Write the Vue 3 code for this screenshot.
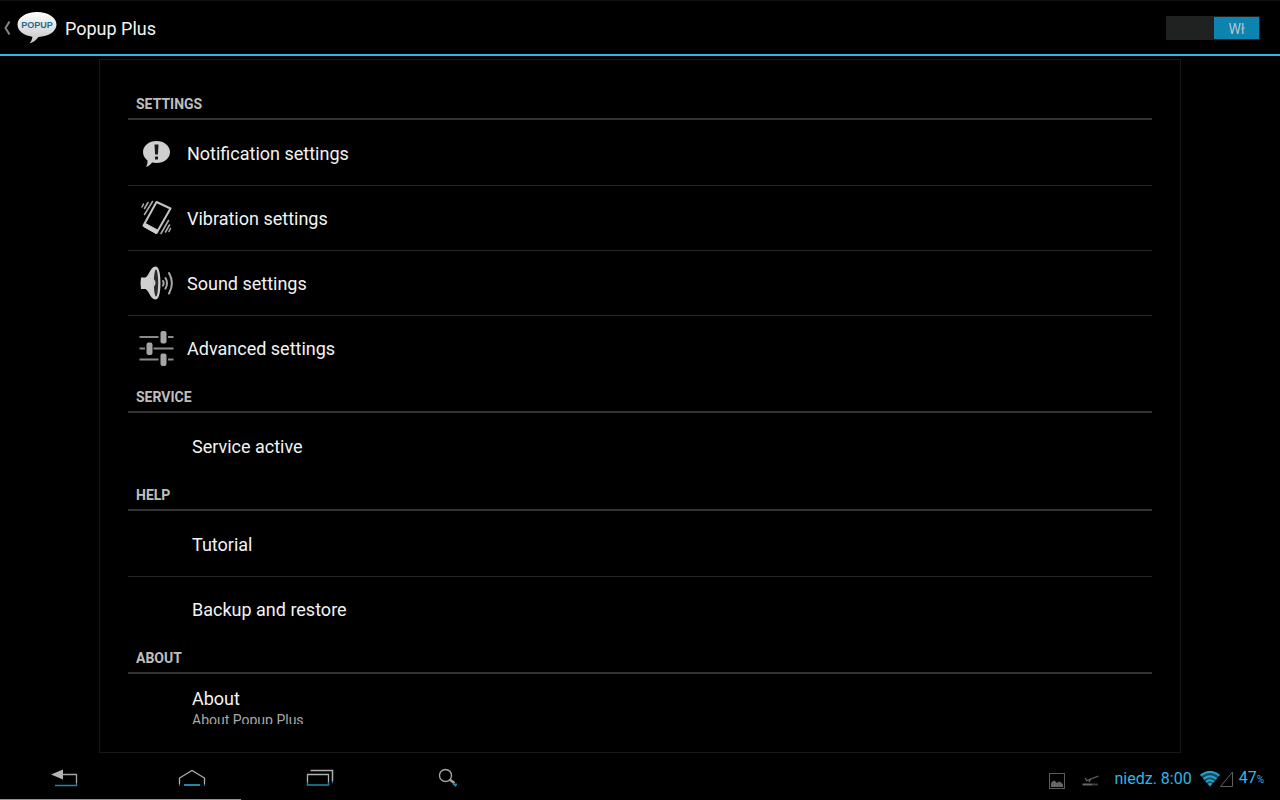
<template>
  <div class="screen">
    <header class="action-bar">
      <button type="button" class="up-btn" aria-label="Navigate up">
        <svg class="up-arrow" width="8" height="16" viewBox="0 0 8 16" fill="none" stroke="#858585" stroke-width="2">
          <path d="M6.500 1.500 L2.500 8 L6.500 14.500" />
        </svg>
        <svg class="app-logo" width="40" height="34" viewBox="0 0 40 34">
          <defs>
            <linearGradient id="bubble" x1="0" y1="0" x2="0" y2="1">
              <stop offset="0" stop-color="#ffffff" />
              <stop offset="1" stop-color="#c4c4c4" />
            </linearGradient>
          </defs>
          <path
            d="M20 1 C31 1 39.500 6.500 39.500 13.500 C39.500 20.500 31.500 25.500 21.500 26 C19 29.500 16 31.500 12.300 32.500 C14.300 30.500 15.200 28 15.400 25.700 C6.500 24.500 0.500 19.800 0.500 13.500 C0.500 6.500 9 1 20 1 Z"
            fill="url(#bubble)"
          />
          <text x="20" y="17" class="logo-text">POPUP</text>
        </svg>
      </button>
      <h1 class="title">Popup Plus</h1>
      <label class="switch">
        <input v-model="enabled" type="checkbox" class="switch-input" aria-label="Popup Plus" />
        <span class="switch-thumb">{{ enabled ? 'Wł' : 'Wył' }}</span>
      </label>
    </header>

    <main class="content">
      <div class="panel">
        <div class="list">
          <section v-for="section in sections" :key="section.title">
            <h2 class="section-title">{{ section.title }}</h2>
            <button v-for="item in section.items" :key="item.label" type="button" class="row">
              <span class="row-icon" :class="{ empty: !item.icon }">
                <svg v-if="item.icon === 'notification'" width="36" height="36" viewBox="0 0 36 36">
                  <path
                    d="M18.500 6 C26 6 32 10.800 32 17 C32 23.500 26 28 18.500 28 C17 28 15.500 27.800 14.100 27.500 C12.500 29.500 10.500 31 8 32 C9 30 9.700 28 9.500 25.500 C6.800 23.500 5 20.500 5 17 C5 10.800 11 6 18.500 6 Z"
                    fill="#cfcfcf"
                  />
                  <path d="M16.500 9.500 H20.500 L19.900 19.500 H17.100 Z" fill="#181818" />
                  <rect x="17" y="21.500" width="3" height="3" rx="0.500" fill="#181818" />
                </svg>
                <svg v-else-if="item.icon === 'vibration'" width="36" height="36" viewBox="0 0 36 36">
                  <path d="M18.500 2 L32.500 8.500 L18.500 33 L5.500 25.500 Z" fill="none" stroke="#c4c4c4" stroke-width="2" stroke-linejoin="round" />
                  <path d="M7.500 23.500 L20.500 30.500 L18 33.500 L5.500 26.500 Z" fill="#cfcfcf" stroke="#cfcfcf" stroke-linejoin="round" />
                  <path
                    d="M14.500 1.500 L6.500 14.500 M10 2.500 L6.500 8.500 M5.500 4 L4 7 M30.500 20.500 L23 33.500 M31.500 25 L27.500 32 M32.500 28.500 L31 31.500"
                    fill="none"
                    stroke="#a8a8a8"
                    stroke-width="1.600"
                    stroke-linecap="round"
                  />
                </svg>
                <svg v-else-if="item.icon === 'sound'" width="36" height="36" viewBox="0 0 36 36">
                  <path d="M3 12.500 H7.500 C12 9.500 12 2 17.500 1.500 C21 1.500 22.500 9 22.500 18 C22.500 27 21 34.500 17.500 34.500 C12 34 12 27 7.500 24 H3 Q2 18 3 12.500 Z" fill="#cfcfcf" />
                  <ellipse cx="18" cy="18" rx="2.200" ry="13.500" fill="#2b2b2b" />
                  <path d="M15.500 13.500 Q19.500 18 15.500 22.500 Z" fill="#cfcfcf" />
                  <path d="M25 16 Q26.300 18 25 20.500 M27.500 13 Q30.500 18 27.500 23.500 M31 8 Q36.800 18 31 28.500" fill="none" stroke="#a8a8a8" stroke-width="2" stroke-linecap="round" />
                </svg>
                <svg v-else-if="item.icon === 'advanced'" width="36" height="36" viewBox="0 0 36 36">
                  <path d="M1.500 7 H20.500 M30 7 H35.500 M1.500 18.500 H7 M15.500 18.500 H35.500 M1.500 29.500 H20.500 M30 29.500 H35.500" stroke="#8a8a8a" stroke-width="2" />
                  <g fill="#a6a6a6">
                    <rect x="22.500" y="1" width="6" height="12.500" rx="2" />
                    <rect x="8.500" y="12.500" width="6" height="12.500" rx="2" />
                    <rect x="22.500" y="23.500" width="6" height="12.500" rx="2" />
                  </g>
                </svg>
              </span>
              <span class="row-text">
                <span class="row-label">{{ item.label }}</span>
                <span v-if="item.summary" class="row-summary">{{ item.summary }}</span>
              </span>
            </button>
          </section>
        </div>
      </div>
    </main>

    <footer class="system-bar">
      <nav class="nav-keys">
        <button type="button" class="nav-btn" aria-label="Back">
          <svg width="32" height="32" viewBox="0 0 32 32" fill="none">
            <path d="M3 12.500 L15 7.500 V17.500 Z" fill="#b5b5b5" />
            <path d="M14 12.500 H28.500 V21" stroke="#a5a5a5" stroke-width="1.300" />
            <path d="M28.500 21 V23.500 H7" stroke="#2186aa" stroke-width="1.300" />
          </svg>
        </button>
        <button type="button" class="nav-btn" aria-label="Home">
          <svg width="32" height="32" viewBox="0 0 32 32" fill="none">
            <path d="M3.500 22 V16 L16 8.500 L28.500 16 V22" stroke="#b0b0b0" stroke-width="1.300" />
            <path d="M3 23 H4 M8 23 H24 M28 23 H29" stroke="#2186aa" stroke-width="2" />
          </svg>
        </button>
        <button type="button" class="nav-btn" aria-label="Recent apps">
          <svg width="32" height="32" viewBox="0 0 32 32" fill="none">
            <path d="M6.500 8.500 H28.500 V19.500" stroke="#b0b0b0" stroke-width="1.500" />
            <path d="M3.500 20 V12.500 H24.500 V20" stroke="#b0b0b0" stroke-width="1.300" />
            <path d="M3.500 20 V23 H24.500 V20 M28 20.500 H29" stroke="#2186aa" stroke-width="1.500" />
          </svg>
        </button>
        <button type="button" class="nav-btn" aria-label="Search">
          <svg width="32" height="32" viewBox="0 0 32 32" fill="none">
            <circle cx="13.500" cy="13.500" r="6" stroke="#a5a5a5" stroke-width="1.400" />
            <path d="M17.500 17.500 L22.500 21" stroke="#a5a5a5" stroke-width="2.400" />
            <path d="M20 21.500 H25 V23 L23.500 25 Z" fill="#2186aa" />
          </svg>
        </button>
      </nav>

      <div class="status">
        <svg class="status-image" width="16" height="16" viewBox="0 0 16 16">
          <rect x="0.500" y="0.500" width="15" height="15" fill="none" stroke="#5c5c5c" />
          <path d="M2 14 V10 L4 8 L5.500 7.500 L8 10 L10 8.500 L12 9.500 L14 11.500 V14 Z" fill="#666" />
        </svg>
        <svg class="status-plane" width="18" height="12" viewBox="0 0 18 12" fill="none" stroke="#666">
          <path d="M4 6 L16.500 1 M3 3 L5 6 M7 7 L9 3.500" stroke-width="1.300" />
          <path d="M0.500 9.500 H10" stroke-width="2" />
          <path d="M10 9.500 H16" stroke="#3c3c3c" stroke-width="2" />
        </svg>
        <time class="clock">niedz. 8:00</time>
        <svg class="status-wifi" width="20" height="16" viewBox="0 0 20 16" fill="none">
          <path d="M0.500 4.500 Q10 -3 19.500 4.500 L10 15.500 Z" fill="#125068" />
          <path d="M0.500 4.500 Q10 -3 19.500 4.500 M3.500 8 Q10 2.500 16.500 8 M6 11 Q10 7.500 14 11" stroke="#2ba0cb" stroke-width="1.800" />
          <path d="M7.800 12.800 Q10 11 12.200 12.800 L10 15.500 Z" fill="#2ba0cb" />
        </svg>
        <svg class="status-signal" width="14" height="16" viewBox="0 0 14 16" fill="none">
          <path d="M0.500 15.500 H12.500 V1 Z" stroke="#5e5e5e" />
        </svg>
        <span class="battery">47<small class="percent">%</small></span>
      </div>
      <div class="progress"></div>
    </footer>
  </div>
</template>

<script setup>
import { ref } from 'vue'

const enabled = ref(true)

const sections = [
  {
    title: 'SETTINGS',
    items: [
      { label: 'Notification settings', icon: 'notification' },
      { label: 'Vibration settings', icon: 'vibration' },
      { label: 'Sound settings', icon: 'sound' },
      { label: 'Advanced settings', icon: 'advanced' },
    ],
  },
  { title: 'SERVICE', items: [{ label: 'Service active' }] },
  { title: 'HELP', items: [{ label: 'Tutorial' }, { label: 'Backup and restore' }] },
  { title: 'ABOUT', items: [{ label: 'About', summary: 'About Popup Plus' }] },
]
</script>

<style>
body {
  background: #000;
}
</style>

<style scoped>
.screen {
  display: flex;
  flex-direction: column;
  height: 100vh;
  background: #000;
  color: #f3f3f3;
  font-family: Roboto, 'Noto Sans', sans-serif;
  overflow: hidden;
}

.screen * {
  box-sizing: border-box;
}

button {
  margin: 0;
  padding: 0;
  background: none;
  border: none;
  color: inherit;
  font-family: inherit;
  cursor: pointer;
}

.action-bar {
  display: flex;
  flex: none;
  align-items: center;
  height: 56px;
  padding: 0 20px 0 3px;
  border-top: 1px solid #121212;
  border-bottom: 2px solid #33b5e5;
}

.up-btn {
  display: flex;
  align-items: center;
  gap: 6px;
}

.logo-text {
  font-family: 'Liberation Sans', sans-serif;
  font-size: 9px;
  font-weight: 700;
  fill: #1f6e93;
  text-anchor: middle;
}

.title {
  margin: 0 0 0 8px;
  padding-top: 2px;
  font-size: 18px;
  font-weight: 400;
  line-height: 24px;
}

.switch {
  position: relative;
  display: flex;
  justify-content: flex-end;
  width: 94px;
  height: 24px;
  margin-left: auto;
  padding: 1px;
  background: #202121;
  cursor: pointer;
}

.switch-input {
  position: absolute;
  inset: 0;
  margin: 0;
  opacity: 0;
}

.switch:has(.switch-input:not(:checked)) {
  justify-content: flex-start;
}

.switch-thumb {
  width: 45px;
  background: #0d83b0;
  color: #b9c3c8;
  font-size: 14px;
  line-height: 24px;
  text-align: center;
}

.content {
  display: flex;
  flex: 1;
  justify-content: center;
  min-height: 0;
  padding: 3px 99px 0;
}

.panel {
  display: flex;
  width: 100%;
  padding: 27px 28px 28px;
  border: 1px solid #181818;
}

.list {
  flex: 1;
  overflow: hidden;
}

.section-title {
  height: 33px;
  margin: 0;
  padding: 7px 8px 0;
  border-bottom: 2px solid #333;
  color: #bebebe;
  font-size: 14px;
  font-weight: 700;
  line-height: 20px;
}

.row {
  display: flex;
  align-items: center;
  width: 100%;
  height: 65px;
  padding-left: 10px;
  text-align: left;
}

.row + .row {
  border-top: 1px solid #262626;
}

.row-icon {
  display: flex;
  width: 36px;
  margin-right: 13px;
}

.row-icon.empty {
  margin-right: 18px;
}

.row-text {
  display: flex;
  flex-direction: column;
  padding-top: 2px;
}

.row-label {
  font-size: 18px;
  line-height: 24px;
}

.row-summary {
  color: #a8a8a8;
  font-size: 14px;
  line-height: 18px;
}

.system-bar {
  position: relative;
  display: flex;
  flex: none;
  justify-content: space-between;
  height: 47px;
}

.nav-keys {
  display: flex;
  padding-top: 2px;
}

.nav-btn {
  display: flex;
  align-items: center;
  justify-content: center;
  width: 128px;
}

.status {
  display: flex;
  align-items: center;
  padding: 4px 16px 0 0;
  color: #33b5e5;
}

.status-image {
  margin: 4px 17px 0 0;
}

.status-plane {
  margin: 4px 14px 0 0;
}

.clock {
  margin-right: 8px;
  font-size: 16px;
  line-height: 20px;
}

.status-signal {
  margin-right: 5px;
}

.battery {
  font-size: 16px;
  line-height: 20px;
}

.percent {
  font-size: 10px;
}

.progress {
  position: absolute;
  bottom: 0;
  left: 0;
  width: 241px;
  height: 1px;
  background: #33b5e5;
}
</style>
